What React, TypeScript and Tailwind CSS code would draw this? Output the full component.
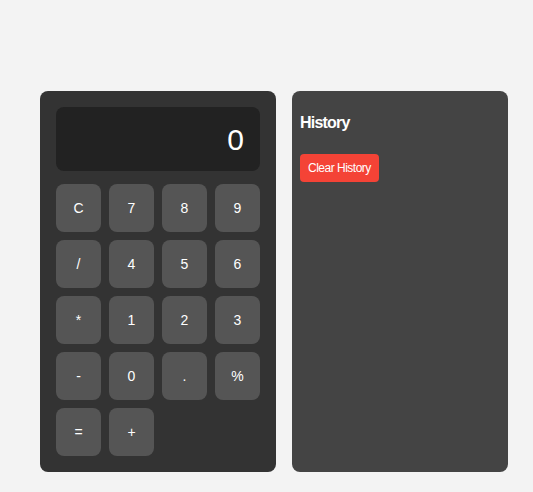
const keys = ['C', '7', '8', '9', '/', '4', '5', '6', '*', '1', '2', '3', '-', '0', '.', '%', '=', '+'];

export default function App() {
  return (
    <div
      className="min-h-[492px] w-full bg-[#f3f3f3] pt-[91px] pl-[40px] flex gap-4 items-start"
      style={{ fontFamily: '"Liberation Sans", Arial, sans-serif' }}
    >
      <div className="w-[236px] h-[381px] bg-[#333333] rounded-lg p-4 flex flex-col gap-[13px]">
        <div className="h-16 bg-[#222222] rounded-lg flex items-center justify-end px-4 text-white text-[30px]">
          0
        </div>
        <div className="grid grid-cols-4 gap-2">
          {keys.map((k) => (
            <button
              key={k}
              className="h-12 bg-[#555555] rounded-lg text-white text-sm flex items-center justify-center"
            >
              {k}
            </button>
          ))}
        </div>
      </div>

      <div className="w-[216px] h-[381px] bg-[#444444] rounded-lg px-2 pt-[22px]">
        <h2 className="text-white text-base font-bold leading-5 tracking-[-0.8px]">History</h2>
        <button className="mt-[21px] h-7 px-2 bg-[#f44336] rounded text-white text-xs tracking-[-0.5px]">
          Clear History
        </button>
      </div>
    </div>
  );
}
